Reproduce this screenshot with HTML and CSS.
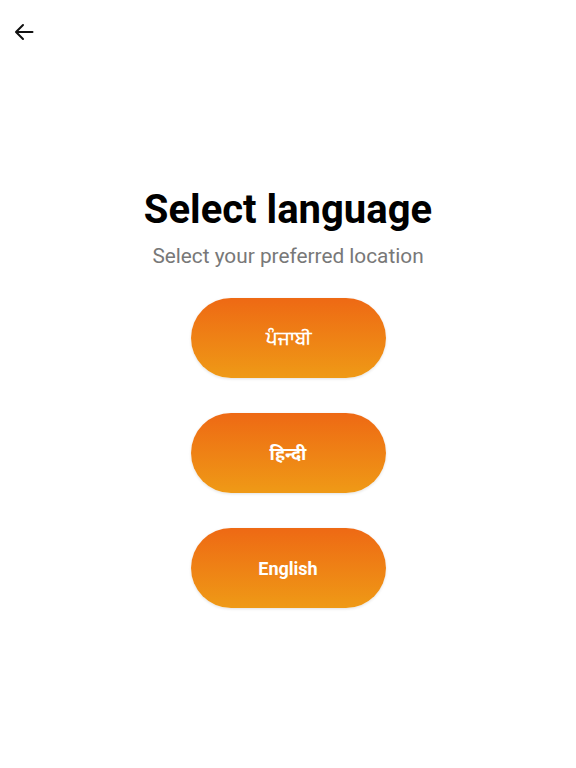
FILE: index.html
```html
<!DOCTYPE html>
<html lang="en">
<head>
<meta charset="utf-8">
<title>Select language</title>
<link rel="stylesheet" href="styles.css">
</head>
<body>
<div class="screen">
  <header class="topbar">
    <button class="back" aria-label="Back">
      <svg width="24" height="24" viewBox="0 0 24 24"><path d="M20.5 12H4.5M11 5l-7 7 7 7" fill="none" stroke="#111" stroke-width="2" stroke-linecap="round" stroke-linejoin="round"/></svg>
    </button>
  </header>
  <main class="content">
    <h1 class="title">Select language</h1>
    <p class="subtitle">Select your preferred location</p>
    <div class="options">
      <button class="lang">ਪੰਜਾਬੀ</button>
      <button class="lang">हिन्दी</button>
      <button class="lang">English</button>
    </div>
  </main>
</div>
</body>
</html>
```
FILE: styles.css
```css
* { box-sizing: border-box; }
html, body { margin: 0; padding: 0; background: #fff; }
body { font-family: Roboto, "Noto Sans", "Liberation Sans", sans-serif; }
.screen { width: 576px; height: 768px; display: flex; flex-direction: column; }
.topbar { height: 62px; padding: 20px 0 0 12px; }
.back { background: none; border: 0; padding: 0; width: 24px; height: 24px; display: block; cursor: pointer; }
.back svg { display: block; }
.content { display: flex; flex-direction: column; align-items: center; padding-top: 122px; }
.title { margin: 0; font-size: 40px; font-weight: 700; color: #000; line-height: 52px; letter-spacing: 0; }
.subtitle { margin: 7px 0 0; font-size: 20.8px; color: #787878; line-height: 26px; }
.options { display: flex; flex-direction: column; gap: 35px; margin-top: 29px; }
.lang {
  width: 195px; height: 80px; border: 0; border-radius: 40px;
  background: linear-gradient(180deg, #ee6914 0%, #ef9a16 100%);
  color: #fff; font-family: Roboto, "Noto Sans", sans-serif; font-size: 18px; font-weight: 700;
  box-shadow: 0 1px 3px rgba(0,0,0,0.12);
  cursor: pointer;
}
```
